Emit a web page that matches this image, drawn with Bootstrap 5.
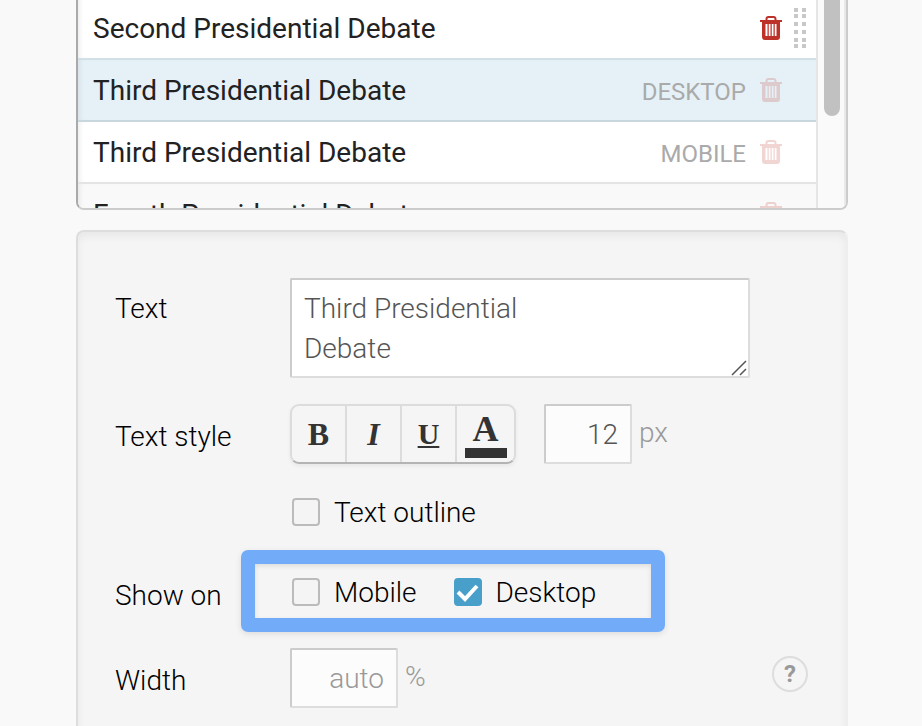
<!DOCTYPE html>
<html lang="en">
<head>
<meta charset="utf-8">
<meta name="viewport" content="width=device-width, initial-scale=1">
<title>Labels</title>
<link href="https://cdn.jsdelivr.net/npm/bootstrap@5.3.0/dist/css/bootstrap.min.css" rel="stylesheet">
<style>
body{background:#f9f9f9;color:#000;font-family:Roboto,sans-serif;font-size:28px;line-height:40px;font-weight:300}
.editor{padding:0 74px 0 76px;overflow:hidden;height:100vh}
/* label list */
.list-panel{height:210px;border:2px solid #ccc;border-left-color:#aaa;border-top:0;border-radius:0 0 8px 8px;overflow:hidden;background:#fff}
.label-list{margin-top:-2px;border-right:2px solid #e6e6e6}
.label-item{height:62px;padding:0 34px 0 15px;border-bottom:2px solid #e4e4e4;color:#222;font-weight:400;gap:14px;box-shadow:inset 5px 0 5px -3px rgba(0,0,0,.07)}
.label-item.before-current{border-color:#d3dfe6}
.label-item.current{background:#e6f1f7;border-color:#c8d6de}
.label-item.alt{background:#f9f9f9}
.label-item.movable{padding-right:10px}
.label-name{margin-right:auto;padding-top:2px}
.device{color:#aaa;font-size:24px}
.trash{width:22px;height:24px;padding:0;border:0;background:none;color:#bd3228;display:flex}
.trash.faded{opacity:.2}
.grip{display:flex;margin-left:-2px}
.scroll-track{width:28px;background:#fafafa;border-right:2px solid #e9e9e9;padding:0 4px 0 6px}
.scroll-thumb{height:116px;background:#c1c1c1;border-radius:0 0 8px 8px}
/* settings */
.settings{margin-top:20px;padding:46px 38px 40px 37px;border:2px solid #ddd;border-right-color:#eee;border-radius:8px;background:#f5f5f5;box-shadow:inset 0 4px 8px rgba(0,0,0,.06);height:600px}
.field-name{width:175px;flex:none;padding-top:6px}
.field-text{margin-bottom:26px;padding-right:58px}
.field-text .field-name{padding-top:11px}
.field-style{margin-bottom:27px}
.field-outline{margin-bottom:17px;padding-left:177px}
.field-show{margin-bottom:16px}
.field-show .field-name{padding-top:10px}
.box-input{border:2px solid #ddd;border-top-color:#ccc;border-left-color:#ccc;border-radius:2px;background:#fcfcfc;color:#555;font-weight:300;height:60px;padding:0 12px;text-align:right}
.box-input::placeholder{color:#999;opacity:1}
textarea.box-input{display:block;width:100%;height:100px;padding:9px 12px 7px;resize:none;text-align:left;background:#fff;overflow:hidden}
.resize-mark{position:absolute;right:3px;bottom:2px;pointer-events:none}
.size-input{width:88px;margin-left:28px}
.width-input{width:108px}
.unit{color:#999;margin-left:7px;padding-bottom:2px}
.style-group{border:2px solid #dcdcdc;border-bottom-color:#b4b4b4;border-radius:9px;height:60px;box-shadow:0 2px 4px rgba(0,0,0,.06)}
.style-btn{width:55px;padding:0;border:0;border-right:2px solid #dcdcdc;border-radius:0;color:#333;font:700 32px/56px "Liberation Serif",serif}
.style-btn.underlined{text-decoration:underline;text-decoration-thickness:2px;text-underline-offset:2px;font-size:30px;line-height:52px}
.style-btn.last{width:57px;border:0;display:flex;flex-direction:column;align-items:center;font-size:36px;line-height:42px;padding-top:2px}
.swatch{width:42px;height:10px;margin-top:-2px;background:#333}
.tick-label{padding-top:2px}
.tick{appearance:none;width:28px;height:28px;margin:0 14px 2px 0;border:2px solid #bbb;border-radius:4px;background:#f4f4f4;flex:none}
.tick:checked{border-color:#489fc9;background:#489fc9 url("data:image/svg+xml,%3Csvg xmlns='http://www.w3.org/2000/svg' viewBox='0 0 24 24'%3E%3Cpath d='M2 12l7 7L21 6' fill='none' stroke='white' stroke-width='4'/%3E%3C/svg%3E") center/24px no-repeat}
.spotlight{width:424px;height:82px;margin-left:-49px;padding:2px 0 0 37px;border:14px solid #72acf8;border-radius:7px;box-shadow:0 2px 6px rgba(0,0,0,.1),inset 0 2px 5px rgba(0,0,0,.1);gap:37px}
.help{width:36px;height:36px;margin-bottom:8px;padding:0;border:2px solid #ddd;border-radius:50%;background:none;color:#999;font-size:24px;font-weight:700;line-height:32px}
</style>
<script defer src="https://cdn.jsdelivr.net/npm/bootstrap@5.3.0/dist/js/bootstrap.bundle.min.js"></script>
</head>
<body>
<svg class="d-none">
  <symbol id="bin" viewBox="0 0 22 24"><path fill="none" stroke="currentColor" stroke-width="2" d="M6.500 5V3Q6.500 1 8.500 1h5Q15.500 1 15.500 3v2"/><path fill="currentColor" fill-rule="evenodd" d="M0 4h22v2h-2v15q0 3-3 3H5q-3 0-3-3V6H0zM5.500 8v12h2V8zM8.750 8v12h1.750V8zM11.750 8v12h1.750V8zM14.750 8v12h1.750V8z"/></symbol>
</svg>
<main class="editor">
  <section class="list-panel d-flex">
    <ul class="label-list list-unstyled flex-grow-1 mb-0">
      <li class="label-item before-current movable d-flex align-items-center"><span class="label-name">Second Presidential Debate</span><button class="trash" type="button" aria-label="Delete"><svg width="22" height="24"><use href="#bin"/></svg></button>
        <svg class="grip" width="12" height="40" fill="#c8c8c8" aria-hidden="true"><path d="M0 0h4v4H0zM8 0h4v4H8zM0 6h4v4H0zM8 6h4v4H8zM0 14h4v4H0zM8 14h4v4H8zM0 22h4v4H0zM8 22h4v4H8zM0 30h4v4H0zM8 30h4v4H8zM0 36h4v4H0zM8 36h4v4H8z"/></svg></li>
      <li class="label-item current d-flex align-items-center"><span class="label-name">Third Presidential Debate</span><span class="device pt-1">DESKTOP</span><button class="trash faded" type="button" aria-label="Delete"><svg width="22" height="24"><use href="#bin"/></svg></button></li>
      <li class="label-item d-flex align-items-center"><span class="label-name">Third Presidential Debate</span><span class="device pt-1">MOBILE</span><button class="trash faded" type="button" aria-label="Delete"><svg width="22" height="24"><use href="#bin"/></svg></button></li>
      <li class="label-item alt d-flex align-items-center"><span class="label-name">Fourth Presidential Debate</span><button class="trash faded" type="button" aria-label="Delete"><svg width="22" height="24"><use href="#bin"/></svg></button></li>
    </ul>
    <div class="scroll-track flex-shrink-0"><div class="scroll-thumb"></div></div>
  </section>

  <form class="settings">
    <div class="field-text d-flex align-items-start">
      <label class="field-name" for="text">Text</label>
      <div class="position-relative flex-grow-1">
        <textarea class="box-input" id="text" rows="2">Third Presidential
Debate</textarea>
        <svg class="resize-mark" width="16" height="16" fill="none" stroke="#555" stroke-width="1.500" aria-hidden="true"><path d="M1 15L15 1M9 15l6-6"/></svg>
      </div>
    </div>
    <div class="field-style d-flex align-items-center">
      <label class="field-name" for="size">Text style</label>
      <div class="style-group d-flex" role="group" aria-label="Text style">
        <button class="style-btn btn" type="button">B</button>
        <button class="style-btn btn fst-italic" type="button">I</button>
        <button class="style-btn btn underlined" type="button">U</button>
        <button class="style-btn btn last" type="button" aria-label="Text colour">A<span class="swatch"></span></button>
      </div>
      <input class="box-input size-input" id="size" type="text" inputmode="numeric" value="12">
      <span class="unit">px</span>
    </div>
    <div class="field-outline d-flex">
      <label class="tick-label d-flex align-items-center"><input class="tick" type="checkbox">Text outline</label>
    </div>
    <div class="field-show d-flex align-items-center">
      <span class="field-name">Show on</span>
      <div class="spotlight d-flex align-items-center" role="group" aria-label="Show on">
        <label class="tick-label d-flex align-items-center"><input class="tick" type="checkbox">Mobile</label>
        <label class="tick-label d-flex align-items-center"><input class="tick" type="checkbox" checked>Desktop</label>
      </div>
    </div>
    <div class="d-flex align-items-center">
      <label class="field-name" for="width">Width</label>
      <input class="box-input width-input" id="width" type="text" placeholder="auto">
      <span class="unit">%</span>
      <button class="help ms-auto" type="button">?</button>
    </div>
  </form>
</main>
</body>
</html>
